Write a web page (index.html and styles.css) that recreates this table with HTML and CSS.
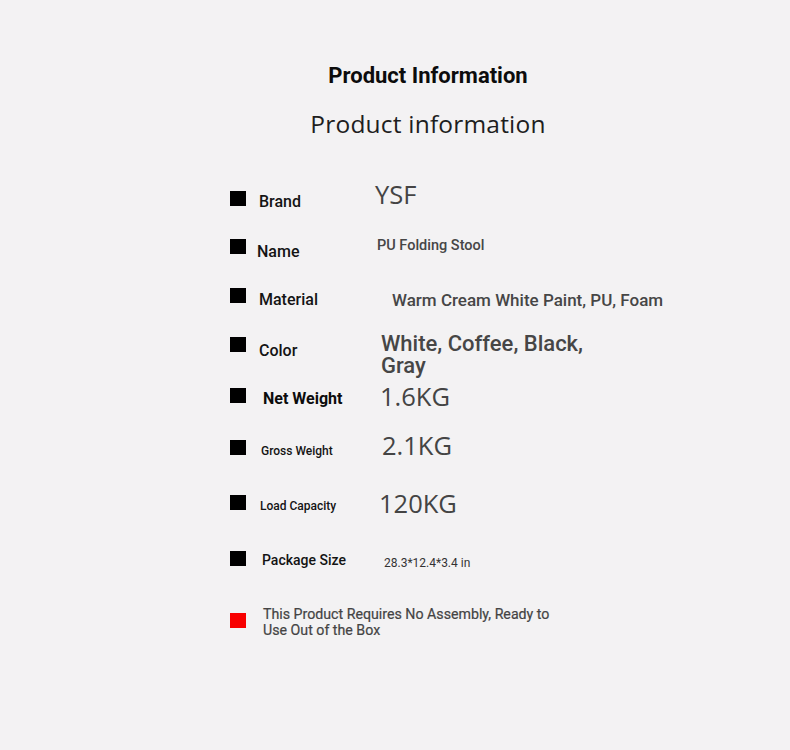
FILE: index.html
```html
<!DOCTYPE html>
<html lang="en">
<head>
<meta charset="utf-8">
<title>Product Information</title>
<link rel="stylesheet" href="styles.css">
</head>
<body>
<main class="page">
  <header class="titles">
    <h1 class="title-main">Product Information</h1>
    <h2 class="title-sub">Product information</h2>
  </header>
  <ul class="specs">
    <li class="row row--brand"><span class="sq"></span><span class="label">Brand</span><span class="value value--big">YSF</span></li>
    <li class="row row--name"><span class="sq"></span><span class="label">Name</span><span class="value value--sm">PU Folding Stool</span></li>
    <li class="row row--material"><span class="sq"></span><span class="label">Material</span><span class="value value--md">Warm Cream White Paint, PU, Foam</span></li>
    <li class="row row--color"><span class="sq"></span><span class="label">Color</span><span class="value value--lg">White, Coffee, Black,<br>Gray</span></li>
    <li class="row row--net"><span class="sq"></span><span class="label label--bold">Net Weight</span><span class="value value--big">1.6KG</span></li>
    <li class="row row--gross"><span class="sq"></span><span class="label label--xs">Gross Weight</span><span class="value value--big">2.1KG</span></li>
    <li class="row row--load"><span class="sq"></span><span class="label label--xs">Load Capacity</span><span class="value value--big">120KG</span></li>
    <li class="row row--package"><span class="sq"></span><span class="label label--sm">Package Size</span><span class="value value--xs">28.3*12.4*3.4 in</span></li>
    <li class="row row--note"><span class="sq sq--red"></span><span class="note">This Product Requires No Assembly, Ready to<br>Use Out of the Box</span></li>
  </ul>
</main>
</body>
</html>
```
FILE: styles.css
```css
html, body {
  margin: 0;
  padding: 0;
  background: #f3f2f3;
}
body {
  width: 790px;
  height: 750px;
  overflow: hidden;
  font-family: Roboto, "Liberation Sans", sans-serif;
  color: #111;
}
.page {
  display: flex;
  flex-direction: column;
}
.titles {
  display: flex;
  flex-direction: column;
  align-items: center;
  padding-left: 66px;
  padding-top: 63px;
}
.title-main {
  margin: 0;
  font-family: Roboto, sans-serif;
  font-weight: 700;
  font-size: 22px;
  line-height: 26px;
  color: #0c0c0c;
}
.title-sub {
  margin: 18px 0 0;
  font-family: "Open Sans", "Noto Sans", sans-serif;
  font-weight: 400;
  font-size: 24.5px;
  line-height: 33px;
  color: #1e1e1e;
  letter-spacing: 0.2px;
}
.specs {
  list-style: none;
  margin: 34px 0 0;
  padding: 0 0 0 230px;
  display: flex;
  flex-direction: column;
}
.row {
  display: grid;
  grid-template-columns: 30px 115px auto;
  align-items: center;
  height: 48px;
}
.sq {
  width: 16px;
  height: 15px;
  background: #000;
}
.sq--red {
  background: #f80000;
}
.label, .value, .note {
  --dy: 0px;
  margin-top: var(--dy);
  margin-bottom: calc(-1 * var(--dy));
  white-space: nowrap;
}
.label {
  font-size: 16px;
  font-weight: 500;
  line-height: 19px;
  color: #141414;
}
.label--bold { font-weight: 700; color: #0c0c0c; }
.label--xs { font-size: 12px; line-height: 14px; }
.label--sm { font-size: 14px; line-height: 17px; }
.value {
  color: #464646;
  font-weight: 500;
}
.value--big {
  font-family: "Open Sans", "Noto Sans", sans-serif;
  font-weight: 400;
  font-size: 25.5px;
  line-height: 34px;
  color: #444;
}
.value--sm { font-size: 14.5px; line-height: 17px; }
.value--md { font-size: 17px; line-height: 20px; }
.value--lg { font-size: 22px; line-height: 22.5px; }
.value--xs { font-size: 12px; line-height: 14px; font-weight: 400; color: #333; }
.note {
  grid-column: 2 / 4;
  font-size: 14.2px;
  line-height: 16px;
  font-weight: 400;
  color: #444;
  margin-left: 3px;
  -webkit-text-stroke: 0.2px #444;
}

/* per-row fine placement */
.row--brand { height: 48px; }
.row--brand .label { --dy: 3px; margin-left: -1px; }
.row--brand .value { --dy: -4px; }

.row--name { height: 48px; }
.row--name .label { --dy: 5px; margin-left: -3px; }
.row--name .value { --dy: -1px; margin-left: 2px; }

.row--material { height: 50px; }
.row--material .label { --dy: 4px; margin-left: -1px; }
.row--material .value { --dy: 4.5px; margin-left: 17px; }

.row--color { height: 48px; }
.row--color .label { --dy: 6px; margin-left: -1px; }
.row--color .value { --dy: 11px; margin-left: 6px; }

.row--net { height: 54px; }
.row--net .label { --dy: 3px; margin-left: 3px; }
.row--net .value { --dy: 0.5px; margin-left: 5px; }

.row--gross { height: 50px; }
.row--gross .label { --dy: 3.5px; margin-left: 1px; }
.row--gross .value { --dy: -2px; margin-left: 7px; }

.row--load { height: 60px; }
.row--load .label { --dy: 4px; }
.row--load .value { --dy: 1px; margin-left: 4px; }

.row--package { height: 52px; }
.row--package .label { --dy: 2.5px; margin-left: 2px; }
.row--package .value { --dy: 5px; margin-left: 9px; }

.row--note { height: 72px; }
.row--note .note { --dy: 2px; }
```
